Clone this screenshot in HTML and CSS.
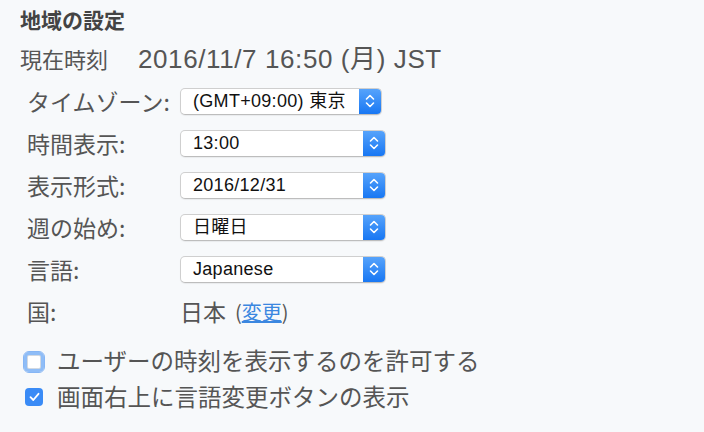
FILE: index.html
```html
<!DOCTYPE html>
<html lang="ja">
<head>
<meta charset="utf-8">
<link rel="stylesheet" href="styles.css">
</head>
<body>
<div class="page">
  <h1 class="title">地域の設定</h1>
  <div class="now"><span class="now-label">現在時刻</span><span class="now-value">2016/11/7 16:50 (月) JST</span></div>
  <div class="form">
    <div class="label">タイムゾーン:</div>
    <div class="field"><div class="select narrow"><span class="value">(GMT+09:00) 東京</span><span class="arrow"><svg width="12" height="16" viewBox="0 0 12 16"><path d="M2.5 6 L6 2.5 L9.5 6 M2.5 10 L6 13.5 L9.5 10" fill="none" stroke="#fff" stroke-width="1.6" stroke-linecap="round" stroke-linejoin="round"/></svg></span></div></div>

    <div class="label">時間表示:</div>
    <div class="field"><div class="select"><span class="value">13:00</span><span class="arrow"><svg width="12" height="16" viewBox="0 0 12 16"><path d="M2.5 6 L6 2.5 L9.5 6 M2.5 10 L6 13.5 L9.5 10" fill="none" stroke="#fff" stroke-width="1.6" stroke-linecap="round" stroke-linejoin="round"/></svg></span></div></div>

    <div class="label">表示形式:</div>
    <div class="field"><div class="select"><span class="value">2016/12/31</span><span class="arrow"><svg width="12" height="16" viewBox="0 0 12 16"><path d="M2.5 6 L6 2.5 L9.5 6 M2.5 10 L6 13.5 L9.5 10" fill="none" stroke="#fff" stroke-width="1.6" stroke-linecap="round" stroke-linejoin="round"/></svg></span></div></div>

    <div class="label">週の始め:</div>
    <div class="field"><div class="select"><span class="value">日曜日</span><span class="arrow"><svg width="12" height="16" viewBox="0 0 12 16"><path d="M2.5 6 L6 2.5 L9.5 6 M2.5 10 L6 13.5 L9.5 10" fill="none" stroke="#fff" stroke-width="1.6" stroke-linecap="round" stroke-linejoin="round"/></svg></span></div></div>

    <div class="label">言語:</div>
    <div class="field"><div class="select"><span class="value">Japanese</span><span class="arrow"><svg width="12" height="16" viewBox="0 0 12 16"><path d="M2.5 6 L6 2.5 L9.5 6 M2.5 10 L6 13.5 L9.5 10" fill="none" stroke="#fff" stroke-width="1.6" stroke-linecap="round" stroke-linejoin="round"/></svg></span></div></div>

    <div class="label">国:</div>
    <div class="field"><span class="country">日本</span><span class="paren">(<a href="#" class="link">変更</a>)</span></div>
  </div>
  <div class="checks">
    <label class="check"><span class="box focus"></span><span class="check-text">ユーザーの時刻を表示するのを許可する</span></label>
    <label class="check"><span class="box checked"><svg width="11" height="10" viewBox="0 0 11 10"><path d="M1.5 5.2 L4.3 8 L9.5 1.8" fill="none" stroke="#fff" stroke-width="1.8" stroke-linecap="round" stroke-linejoin="round"/></svg></span><span class="check-text">画面右上に言語変更ボタンの表示</span></label>
  </div>
</div>
</body>
</html>
```

FILE: styles.css
```css
* { box-sizing: border-box; }
html, body {
  margin: 0;
  padding: 0;
  background: #f7f9fb;
}
body {
  font-family: "Noto Sans CJK JP", "Noto Sans", sans-serif;
  color: #555;
  width: 704px;
  height: 432px;
  overflow: hidden;
}
.page {
  padding: 6px 0 0 20px;
}
.title {
  margin: 0;
  font-size: 21px;
  line-height: 26px;
  font-weight: bold;
  color: #444;
}
.now {
  margin-top: 11px;
  font-size: 22px;
  line-height: 30px;
  color: #555;
  display: flex;
  align-items: baseline;
}
.now-label { width: 118px; }
.now-value {
  font-family: "Liberation Sans", "Noto Sans CJK JP", sans-serif;
  font-size: 26px;
  letter-spacing: 0.6px;
}
.form {
  margin-top: 6px;
  padding-left: 7px;
  display: grid;
  grid-template-columns: 153px auto;
  grid-auto-rows: 42px;
  align-items: center;
}
.label {
  font-size: 23px;
  color: #555;
  line-height: 28px;
}
.field {
  display: flex;
  align-items: center;
}
.select {
  width: 206px;
  height: 27px;
  display: flex;
  align-items: stretch;
  background: #fff;
  border: 1px solid #cfcfcf;
  border-bottom-color: #bdbdbd;
  border-radius: 5px;
  box-shadow: 0 1px 1px rgba(0,0,0,0.06);
  overflow: hidden;
}
.select.narrow { width: 202px; }
.value {
  flex: 1;
  padding-left: 12px;
  font-family: "Liberation Sans", "Noto Sans CJK JP", sans-serif;
  font-size: 18px;
  letter-spacing: 0.3px;
  color: #111;
  line-height: 25px;
}
.arrow {
  width: 22px;
  background: linear-gradient(#56a3fb, #1877f3);
  display: flex;
  align-items: center;
  justify-content: center;
}
.country {
  font-size: 23px;
  color: #555;
  margin-right: 9px;
}
.paren {
  font-size: 20px;
  color: #555;
}
.link {
  color: #3b87e0;
  text-decoration: underline;
}
.checks {
  margin-top: 10px;
  padding-left: 4px;
}
.check {
  display: flex;
  align-items: center;
  height: 36px;
}
.box {
  display: flex;
  align-items: center;
  justify-content: center;
  flex: none;
}
.box.focus {
  width: 22px;
  height: 22px;
  margin-left: -1px;
  margin-right: 12px;
  margin-top: 3px;
  border-radius: 6px;
  background: #fff;
  border: 1px solid #86b6f5;
  box-shadow: 0 0 0 3px #8fbdf7 inset, 0 0 0 4px #d2d9e2 inset;
}
.box.checked {
  width: 18px;
  height: 18px;
  margin-left: 1px;
  margin-right: 14px;
  margin-top: 1px;
  background: #3a8bf6;
  border-radius: 4px;
}
.check-text {
  font-size: 23.5px;
  color: #555;
  line-height: 30px;
}
```
